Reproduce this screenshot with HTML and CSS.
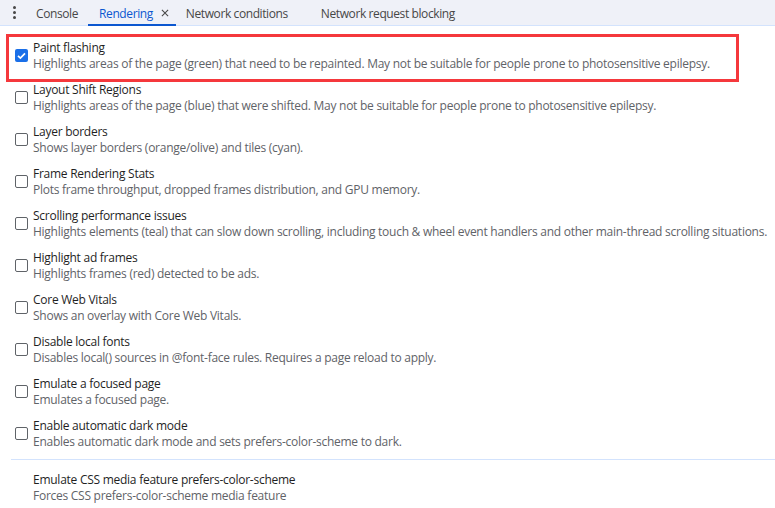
FILE: index.html
```html
<!DOCTYPE html>
<html>
<head>
<meta charset="utf-8">
<link rel="stylesheet" href="styles.css">
</head>
<body>
<div class="toolbar">
  <div class="kebab"><span></span><span></span><span></span></div>
  <div class="tab t-console">Console</div>
  <div class="tab active">Rendering<svg class="close" width="9" height="9" viewBox="0 0 9 9"><path d="M1 1L8 8M8 1L1 8" stroke="#474747" stroke-width="1.2"/></svg></div>
  <div class="tab t-net">Network conditions</div>
  <div class="tab t-block">Network request blocking</div>
</div>
<div class="list">
  <div class="row marked">
    <span class="cb checked"><svg width="13" height="13" viewBox="0 0 13 13"><path d="M3 6.8L5.4 9.1L10 4.3" fill="none" stroke="#fff" stroke-width="1.7"/></svg></span>
    <div class="text"><div class="title">Paint flashing</div><div class="desc">Highlights areas of the page (green) that need to be repainted. May not be suitable for people prone to photosensitive epilepsy.</div></div>
  </div>
  <div class="row">
    <span class="cb"></span>
    <div class="text"><div class="title">Layout Shift Regions</div><div class="desc">Highlights areas of the page (blue) that were shifted. May not be suitable for people prone to photosensitive epilepsy.</div></div>
  </div>
  <div class="row">
    <span class="cb"></span>
    <div class="text"><div class="title">Layer borders</div><div class="desc">Shows layer borders (orange/olive) and tiles (cyan).</div></div>
  </div>
  <div class="row">
    <span class="cb"></span>
    <div class="text"><div class="title">Frame Rendering Stats</div><div class="desc">Plots frame throughput, dropped frames distribution, and GPU memory.</div></div>
  </div>
  <div class="row">
    <span class="cb"></span>
    <div class="text"><div class="title">Scrolling performance issues</div><div class="desc">Highlights elements (teal) that can slow down scrolling, including touch &amp; wheel event handlers and other main-thread scrolling situations.</div></div>
  </div>
  <div class="row">
    <span class="cb"></span>
    <div class="text"><div class="title">Highlight ad frames</div><div class="desc">Highlights frames (red) detected to be ads.</div></div>
  </div>
  <div class="row">
    <span class="cb"></span>
    <div class="text"><div class="title">Core Web Vitals</div><div class="desc">Shows an overlay with Core Web Vitals.</div></div>
  </div>
  <div class="row">
    <span class="cb"></span>
    <div class="text"><div class="title">Disable local fonts</div><div class="desc">Disables local() sources in @font-face rules. Requires a page reload to apply.</div></div>
  </div>
  <div class="row">
    <span class="cb"></span>
    <div class="text"><div class="title">Emulate a focused page</div><div class="desc">Emulates a focused page.</div></div>
  </div>
  <div class="row">
    <span class="cb"></span>
    <div class="text"><div class="title">Enable automatic dark mode</div><div class="desc">Enables automatic dark mode and sets prefers-color-scheme to dark.</div></div>
  </div>
  <div class="sep"></div>
  <div class="media">
    <div class="title">Emulate CSS media feature prefers-color-scheme</div>
    <div class="desc">Forces CSS prefers-color-scheme media feature</div>
  </div>
</div>
</body>
</html>
```
FILE: styles.css
```css
* { box-sizing: border-box; }
html, body { margin: 0; padding: 0; background: #fff; }
body {
  font-family: "Open Sans", "Noto Sans", sans-serif;
  font-size: 12px;
  letter-spacing: -0.26px;
  color: #1f1f1f;
  width: 775px;
  height: 508px;
  overflow: hidden;
}
.toolbar {
  height: 26px;
  background: #eff1f8;
  border-bottom: 1px solid #d3e3fd;
  display: flex;
  align-items: stretch;
  position: relative;
}
.kebab {
  width: 29px;
  display: flex;
  flex-direction: column;
  align-items: center;
  justify-content: center;
  gap: 2px;
}
.kebab span {
  width: 3px; height: 3px; border-radius: 50%;
  background: #474747;
}
.tab {
  display: flex;
  align-items: center;
  color: #474747;
  font-size: 12px;
  letter-spacing: -0.4px;
}
.t-console { padding: 2px 10px 0 7px; }
.active {
  color: #0b57d0;
  padding: 2px 7px 0 11px;
  margin-bottom: -1px;
  border-bottom: 2px solid #0b57d0;
}
.close { margin-left: 8px; width: 8px; height: 8px; }
.t-net { padding: 2px 10px 0 10px; }
.t-block { padding: 2px 10px 0 23px; }
.list { padding-top: 8px; }
.row {
  display: flex;
  align-items: flex-start;
  height: 42px;
  padding: 6px 0 4px;
  position: relative;
}
.marked::after {
  content: "";
  position: absolute;
  left: 6px; top: 0; width: 727px; height: 42px;
  border: 3px solid #f5383c;
  pointer-events: none;
}
.cb {
  flex: none;
  width: 13px; height: 13px;
  margin: 9px 5px 0 15px;
  border: 1.5px solid #5f6368;
  border-radius: 2px;
  background: #fff;
}
.cb.checked {
  border: none;
  background: #1a6fe8;
  display: flex;
}
.title, .desc { line-height: 16px; white-space: nowrap; }
.title { color: #1f1f1f; }
.desc { color: #5f6368; }
.sep {
  height: 1px;
  background: #d3e3fd;
  margin: 5px 0 0 11px;
}
.media { padding: 12px 0 0 33px; }
```
